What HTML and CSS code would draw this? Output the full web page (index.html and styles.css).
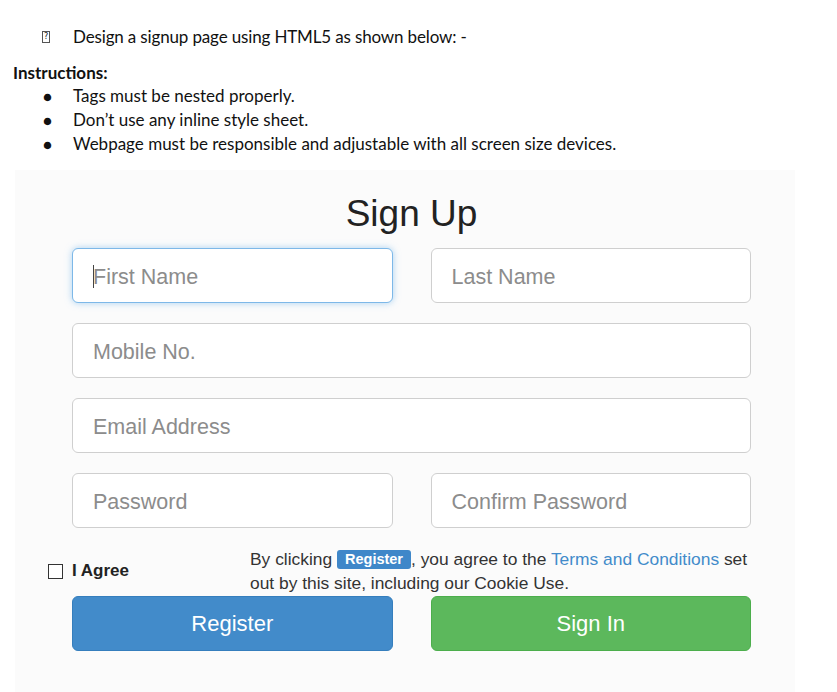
FILE: index.html
```html
<!DOCTYPE html>
<html lang="en">
<head>
<meta charset="utf-8">
<title>Sign Up</title>
<link rel="stylesheet" href="styles.css">
</head>
<body>
<div class="doc">
  <p class="lead"><span class="mark">?</span><span class="lead-text">Design a signup page using HTML5 as shown below: -</span></p>
  <p class="heading">Instructions:</p>
  <ul class="rules">
    <li><span class="dot">●</span><span>Tags must be nested properly.</span></li>
    <li><span class="dot">●</span><span>Don’t use any inline style sheet.</span></li>
    <li><span class="dot">●</span><span>Webpage must be responsible and adjustable with all screen size devices.</span></li>
  </ul>
</div>
<div class="shot">
  <form class="form">
    <h1 class="title">Sign Up</h1>
    <div class="row two">
      <div class="field focus"><input class="input focused" type="text" placeholder="First Name"><span class="caret"></span></div>
      <div class="field"><input class="input" type="text" placeholder="Last Name"></div>
    </div>
    <div class="row"><input class="input" type="text" placeholder="Mobile No."></div>
    <div class="row"><input class="input" type="email" placeholder="Email Address"></div>
    <div class="row two">
      <div class="field"><input class="input" type="password" placeholder="Password"></div>
      <div class="field"><input class="input" type="password" placeholder="Confirm Password"></div>
    </div>
    <div class="agree-row">
      <label class="agree"><input class="check" type="checkbox"><span>I Agree</span></label>
      <p class="terms">By clicking <span class="badge">Register</span>, you agree to the <a class="link" href="#">Terms and Conditions</a> set out by this site, including our Cookie Use.</p>
    </div>
    <div class="row two buttons">
      <button type="button" class="btn btn-blue">Register</button>
      <button type="button" class="btn btn-green">Sign In</button>
    </div>
  </form>
</div>
</body>
</html>
```
FILE: styles.css
```css
* { box-sizing: border-box; }
html, body { margin: 0; padding: 0; background: #ffffff; }
body { width: 837px; height: 692px; overflow: hidden; }

.doc {
  font-family: Lato, "Open Sans", sans-serif;
  font-size: 17px;
  color: #111;
  padding-top: 25px;
}
.lead { margin: 0; line-height: 24px; display: flex; align-items: center; }
.lead-text { letter-spacing: -0.15px; }
.mark {
  display: inline-block;
  width: 8px; height: 12px;
  border: 1px solid #555;
  font-size: 8px; line-height: 10px; text-align: center;
  margin-left: 42px; margin-right: 23px;
  font-family: "DejaVu Sans", sans-serif;
}
.heading { margin: 13px 0 0 13px; line-height: 22px; font-weight: 700; }
.rules { list-style: none; margin: 0; padding: 0; }
.rules li { display: flex; line-height: 24px; }
.dot { width: 73px; padding-left: 43px; font-size: 15px; }

.shot {
  margin: 14px 0 0 15px;
  width: 780px;
  height: 522px;
  background: #fbfbfb;
  padding: 22px 44px 0 57px;
  font-family: "Liberation Sans", Arial, sans-serif;
  color: #333;
}
.form { width: 679px; }
.title {
  margin: 0 0 12px;
  font-size: 37px; font-weight: 400; line-height: 44px;
  text-align: center; color: #222;
}
.row { display: flex; gap: 38px; margin-bottom: 20px; }
.field { flex: 1; position: relative; }
.input {
  width: 100%; height: 55px;
  border: 1px solid #cfcfcf; border-radius: 6px;
  background: #fff;
  padding: 3px 20px 0;
  font-family: "Liberation Sans", Arial, sans-serif;
  font-size: 21.5px; color: #333;
  outline: none;
}
.input::placeholder { color: #8c8c8c; }
.focused { border-color: #7db8e8; box-shadow: 0 0 7px rgba(102, 175, 233, 0.55); }
.caret {
  position: absolute; left: 21px; top: 17px;
  width: 1px; height: 23px; background: #444;
}

.agree-row { display: flex; align-items: center; margin-left: -24px; margin-top: -1px; }
.agree {
  width: 202px; display: flex; align-items: center; gap: 9px;
  font-weight: 700; font-size: 17px; color: #222;
}
.check {
  appearance: none; -webkit-appearance: none;
  width: 15px; height: 15px; margin: 0;
  border: 1px solid #333; background: #fff;
}
.terms {
  width: 501px; margin: 0;
  font-size: 17.4px; line-height: 24px; color: #333;
}
.badge {
  display: inline-block;
  background: #3f87c9; color: #fff;
  font-weight: 700; font-size: 14.5px; line-height: 19px;
  padding: 0 8px; border-radius: 3px;
  vertical-align: 1px;
}
.link { color: #428bca; text-decoration: none; }

.buttons { margin-top: 1px; }
.btn {
  flex: 1; height: 55px;
  border-radius: 6px; border: 1px solid;
  color: #fff;
  font-family: "Liberation Sans", Arial, sans-serif;
  font-size: 22px;
}
.btn-blue { background: #428bca; border-color: #357ebd; }
.btn-green { background: #5cb85c; border-color: #4cae4c; }
```
